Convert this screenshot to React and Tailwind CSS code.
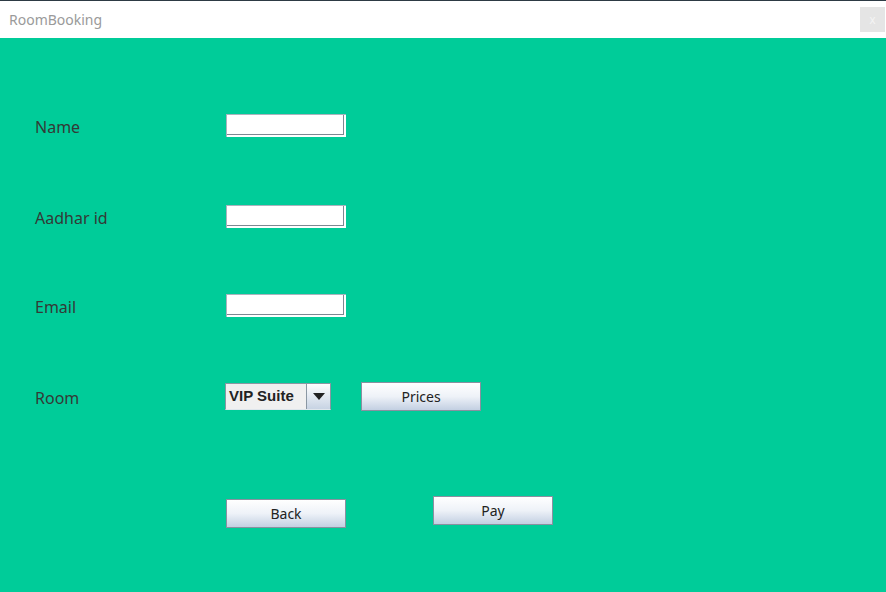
import React from "react";

function Field() {
  return (
    <div className="w-[120px] h-[23px] bg-white border-t border-l border-[#a9b4bd] shadow-[inset_-2px_-2px_0_0_#ffffff,inset_-3px_-3px_0_0_#7d8891]" />
  );
}

function Btn({ children, className = "" }) {
  return (
    <div
      className={
        "w-[120px] h-[29px] border border-[#8a90a0] bg-gradient-to-b from-[#ffffff] via-[#eef2f8] to-[#c3d0e2] flex items-center justify-center text-[14px] text-[#222] " +
        className
      }
      style={{ fontFamily: '"Noto Sans", "Open Sans", sans-serif' }}
    >
      {children}
    </div>
  );
}

function Row({ label, children, className = "" }) {
  return (
    <div className={"flex items-center " + className}>
      <div className="w-[191px] text-[16px] text-[#333a36] pt-[2px]" style={{ fontFamily: '"Noto Sans", "Open Sans", sans-serif' }}>
        {label}
      </div>
      {children}
    </div>
  );
}

export default function App() {
  return (
    <div className="w-[886px] h-[592px] overflow-hidden bg-[#00cc99] flex flex-col">
      <div className="h-[1px] bg-[#2d3a44]" />
      <div className="h-[37px] bg-white flex items-center justify-between pl-[9px] pr-[1px]">
        <span className="text-[14px] text-[#9a9a9a]" style={{ fontFamily: '"Noto Sans", "Open Sans", sans-serif' }}>
          RoomBooking
        </span>
        <div className="w-[25px] h-[25px] bg-[#e5e5e5] flex items-center justify-center text-[12px] text-[#f4f4f4]" style={{ fontFamily: '"Liberation Sans", sans-serif' }}>
          x
        </div>
      </div>
      <div className="flex flex-col pl-[35px]">
        <Row label="Name" className="mt-[76px] h-[23px]">
          <Field />
        </Row>
        <Row label="Aadhar id" className="mt-[68px] h-[23px]">
          <Field />
        </Row>
        <Row label="Email" className="mt-[66px] h-[23px]">
          <Field />
        </Row>
        <Row label="Room" className="mt-[65px] h-[29px]">
          <div className="flex items-center">
            <div className="w-[106px] h-[27px] flex border border-[#8a97a3] border-b-[#dfe6ec] bg-[#eeeeee] -ml-[1px]">
              <div
                className="flex-1 flex items-center pl-[3px] text-[15px] font-bold text-[#222] bg-[#f0f0f0]"
                style={{ fontFamily: '"Liberation Sans", Arial, sans-serif' }}
              >
                VIP Suite
              </div>
              <div className="w-[24px] h-full border-l border-[#8a97a3] bg-gradient-to-b from-[#ffffff] to-[#c7d3e3] flex items-center justify-center">
                <svg width="12" height="7" viewBox="0 0 12 7">
                  <path d="M0 0 H12 L6 7 Z" fill="#222" />
                </svg>
              </div>
            </div>
            <Btn className="ml-[30px]">Prices</Btn>
          </div>
        </Row>
        <div className="flex items-start pl-[191px] mt-[85px]">
          <Btn className="mt-[3px]">Back</Btn>
          <Btn className="ml-[87px]">Pay</Btn>
        </div>
      </div>
    </div>
  );
}
